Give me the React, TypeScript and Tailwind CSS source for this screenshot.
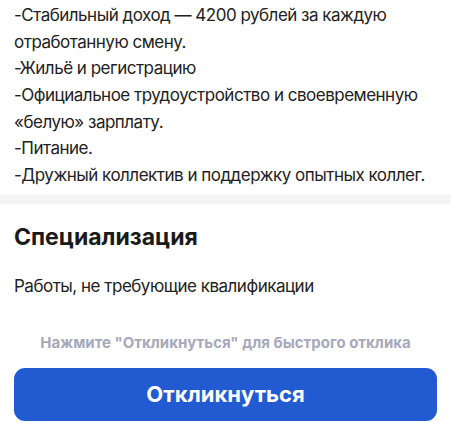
import React from 'react';

const perks = [
  '-Стабильный доход — 4200 рублей за каждую',
  'отработанную смену.',
  '-Жильё и регистрацию',
  '-Официальное трудоустройство и своевременную',
  '«белую» зарплату.',
  '-Питание.',
  '-Дружный коллектив и поддержку опытных коллег.',
];

const App: React.FC = () => {
  return (
    <div className="w-[451px] h-[423px] overflow-hidden bg-white font-['Inter',sans-serif]">
      {/* Описание вакансии */}
      <div className="px-[14px] pt-[2px] pb-[6px] text-[17px] leading-[26.67px] text-[#222222] tracking-[-0.5px]">
        {perks.map((p, i) => (
          <p key={i} className="whitespace-nowrap">{p}</p>
        ))}
      </div>

      <div className="h-[9px] bg-[#f4f4f5]" />

      {/* Специализация */}
      <div className="px-[14px] pt-[18px]">
        <h2 className="text-[23px] leading-[30px] font-bold text-[#1a1a1a]">Специализация</h2>
        <p className="mt-[21px] text-[17px] leading-[26px] text-[#222222] tracking-[-0.5px]">
          Работы, не требующие квалификации
        </p>
      </div>

      {/* Отклик */}
      <div className="px-[14px] pt-[34px]">
        <p className="text-center text-[15px] leading-[20px] font-bold text-[#a7a9bb]">
          Нажмите "Откликнуться" для быстрого отклика
        </p>
        <button className="mt-[15px] w-full h-[53px] rounded-[11px] bg-[#225bd1] text-white text-[22px] font-bold">
          Откликнуться
        </button>
      </div>
    </div>
  );
};

export default App;
